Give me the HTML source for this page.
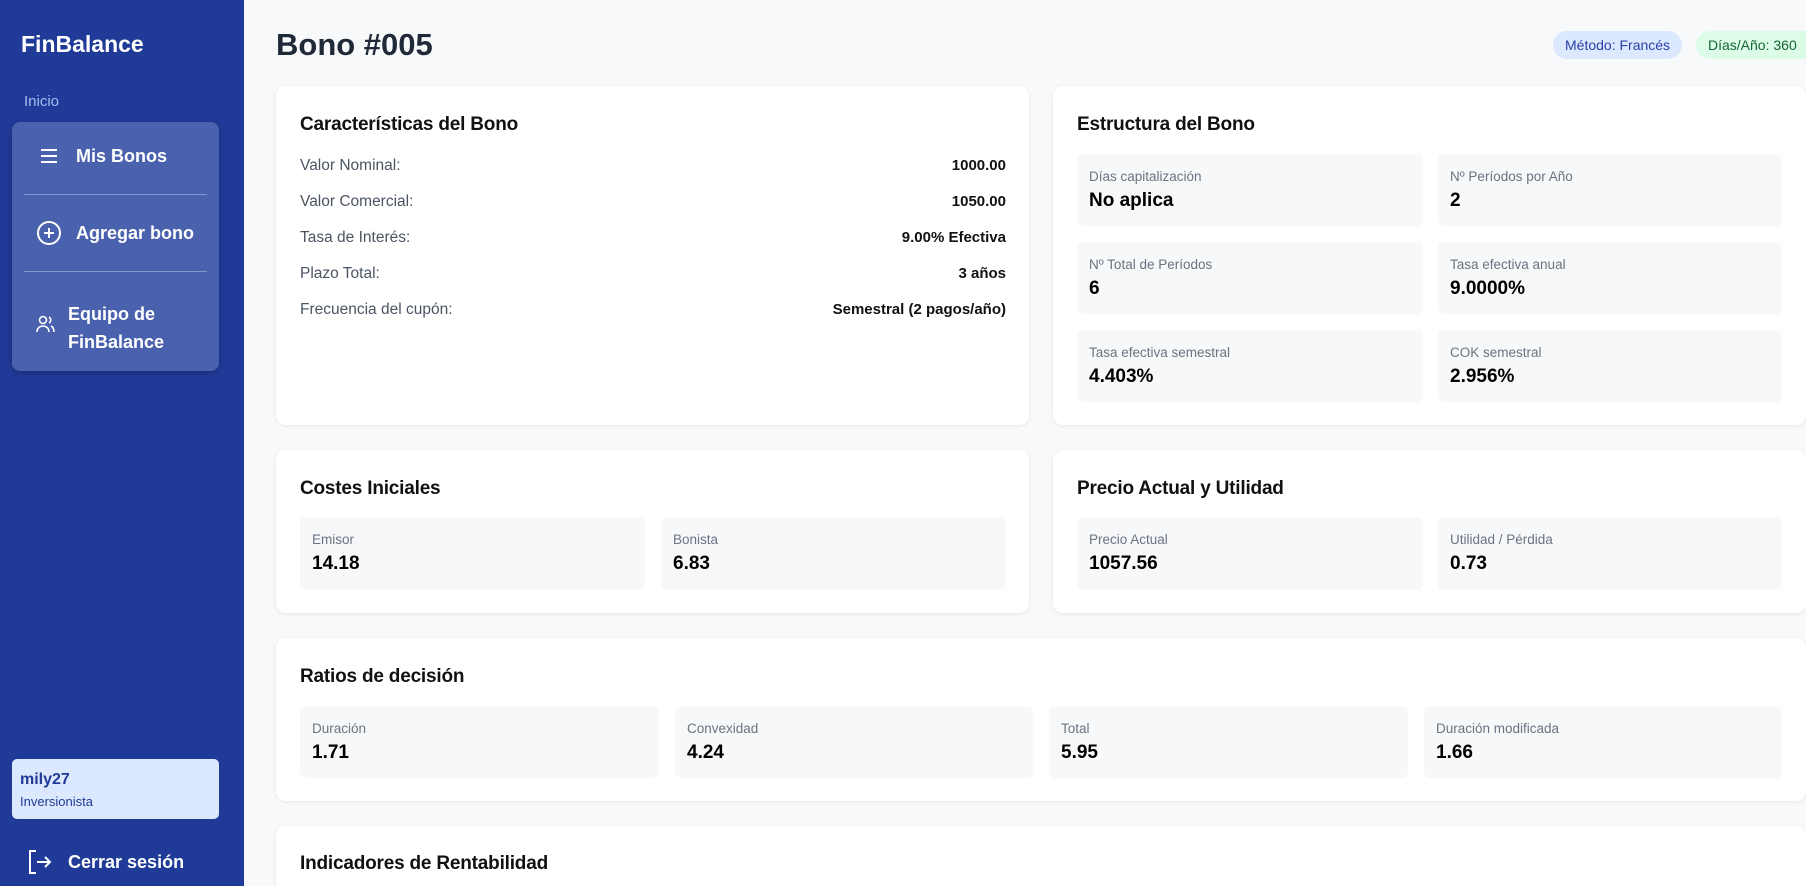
<!DOCTYPE html>
<html style="width:1806px;height:886px;overflow:hidden"><head><meta charset="utf-8"><style>
*{margin:0;padding:0;box-sizing:border-box}
body{width:1806px;height:886px;overflow:hidden;background:#f8f9fb;font-family:"Liberation Sans",sans-serif;position:relative}
.a{position:absolute}
.sb{left:0;top:0;width:244px;height:886px;background:#1f3a97}
.nav{left:12px;top:122px;width:207px;height:249px;background:#4a62ad;border-radius:8px;box-shadow:0 2px 6px rgba(0,0,0,.2)}
.ni{color:#fff;font-size:18px;font-weight:bold;white-space:nowrap}
.hr{left:24px;width:183px;height:1px;background:#8596cf}
.card{background:#fff;border-radius:10px;box-shadow:0 1px 4px rgba(0,0,0,.08)}
.ct{font-size:19px;color:#111;font-weight:bold;letter-spacing:-0.2px}
.row{left:300px;width:706px;font-size:15.5px;color:#4b5563;display:flex;justify-content:space-between}
.row b{color:#111;font-size:15px}
.tile{background:#f7f8fa;border-radius:6px}
.tile .l{position:absolute;left:12px;top:15px;font-size:13.5px;color:#6b7280}
.tile .v{position:absolute;left:12px;top:36px;font-size:19px;font-weight:bold;color:#000}
.badge{font-size:14px;border-radius:14px;height:28px;line-height:28px;padding:0 12px;white-space:nowrap;overflow:hidden}
</style></head><body>
<div class="a sb"></div>
<div class="a" style="left:21px;top:31px;font-size:23px;font-weight:bold;color:#fff">FinBalance</div>
<div class="a" style="left:24px;top:93px;font-size:15px;color:#a8bdf0">Inicio</div>
<div class="a nav"></div>
<svg class="a" style="left:39px;top:146px" width="20" height="20" viewBox="0 0 20 20" stroke="#fff" stroke-width="2"><path d="M2 4h16M2 10h16M2 16h16"/></svg>
<div class="a ni" style="left:76px;top:146px">Mis Bonos</div>
<div class="a hr" style="top:194px"></div>
<svg class="a" style="left:36px;top:220px" width="26" height="26" viewBox="0 0 26 26" fill="none" stroke="#fff" stroke-width="2"><circle cx="13" cy="13" r="11"/><path d="M13 8v10M8 13h10"/></svg>
<div class="a ni" style="left:76px;top:223px">Agregar bono</div>
<div class="a hr" style="top:271px"></div>
<svg class="a" style="left:36px;top:315px" width="20" height="18" viewBox="0 0 20 18" fill="none" stroke="#fff" stroke-width="1.6"><circle cx="7" cy="5" r="3.5"/><path d="M1 17c0-4 3-6 6-6s6 2 6 6"/><path d="M13 2a3.5 3.5 0 0 1 0 6M15 11c2 1 3 3 3 6"/></svg>
<div class="a ni" style="left:68px;top:300px;line-height:28px;white-space:normal">Equipo de<br>FinBalance</div>
<div class="a" style="left:12px;top:759px;width:207px;height:60px;background:#dbe8fe;border-radius:5px"></div>
<div class="a" style="left:20px;top:771px;font-size:16px;font-weight:bold;color:#1f3a97">mily27</div>
<div class="a" style="left:20px;top:794px;font-size:13px;color:#1f3a97">Inversionista</div>
<svg class="a" style="left:27px;top:849px" width="26" height="26" viewBox="0 0 26 26" fill="none" stroke="#fff" stroke-width="2"><path d="M9 2H3v22h6M10 13h13M18 8l5 5-5 5"/></svg>
<div class="a ni" style="left:68px;top:852px">Cerrar sesión</div>

<div class="a" style="left:276px;top:27px;font-size:31px;font-weight:bold;color:#1f2937">Bono #005</div>
<div class="a badge" style="left:1553px;top:31px;background:#dbe8fe;color:#2941a8">Método: Francés</div>
<div class="a badge" style="left:1696px;top:31px;width:110px;background:#dcfce7;color:#166534;border-radius:14px 0 0 14px">Días/Año: 360</div>

<div class="a card" style="left:276px;top:86px;width:753px;height:339px"></div>
<div class="a ct" style="left:300px;top:114px">Características del Bono</div>
<div class="a row" style="top:157px"><span>Valor Nominal:</span><b>1000.00</b></div>
<div class="a row" style="top:193px"><span>Valor Comercial:</span><b>1050.00</b></div>
<div class="a row" style="top:229px"><span>Tasa de Interés:</span><b>9.00% Efectiva</b></div>
<div class="a row" style="top:265px"><span>Plazo Total:</span><b>3 años</b></div>
<div class="a row" style="top:301px"><span>Frecuencia del cupón:</span><b>Semestral (2 pagos/año)</b></div>

<div class="a card" style="left:1053px;top:86px;width:753px;height:339px"></div>
<div class="a ct" style="left:1077px;top:114px">Estructura del Bono</div>
<div class="a tile" style="left:1077px;top:154px;width:346px;height:72px"><span class="l">Días capitalización</span><span class="v">No aplica</span></div>
<div class="a tile" style="left:1438px;top:154px;width:344px;height:72px"><span class="l">Nº Períodos por Año</span><span class="v">2</span></div>
<div class="a tile" style="left:1077px;top:242px;width:346px;height:72px"><span class="l">Nº Total de Períodos</span><span class="v">6</span></div>
<div class="a tile" style="left:1438px;top:242px;width:344px;height:72px"><span class="l">Tasa efectiva anual</span><span class="v">9.0000%</span></div>
<div class="a tile" style="left:1077px;top:330px;width:346px;height:72px"><span class="l">Tasa efectiva semestral</span><span class="v">4.403%</span></div>
<div class="a tile" style="left:1438px;top:330px;width:344px;height:72px"><span class="l">COK semestral</span><span class="v">2.956%</span></div>

<div class="a card" style="left:276px;top:450px;width:753px;height:163px"></div>
<div class="a ct" style="left:300px;top:478px">Costes Iniciales</div>
<div class="a tile" style="left:300px;top:517px;width:345px;height:73px"><span class="l">Emisor</span><span class="v">14.18</span></div>
<div class="a tile" style="left:661px;top:517px;width:345px;height:73px"><span class="l">Bonista</span><span class="v">6.83</span></div>

<div class="a card" style="left:1053px;top:450px;width:753px;height:163px"></div>
<div class="a ct" style="left:1077px;top:478px">Precio Actual y Utilidad</div>
<div class="a tile" style="left:1077px;top:517px;width:346px;height:73px"><span class="l">Precio Actual</span><span class="v">1057.56</span></div>
<div class="a tile" style="left:1438px;top:517px;width:344px;height:73px"><span class="l">Utilidad / Pérdida</span><span class="v">0.73</span></div>

<div class="a card" style="left:276px;top:638px;width:1530px;height:163px"></div>
<div class="a ct" style="left:300px;top:666px">Ratios de decisión</div>
<div class="a tile" style="left:300px;top:706px;width:359px;height:72px"><span class="l">Duración</span><span class="v">1.71</span></div>
<div class="a tile" style="left:675px;top:706px;width:358px;height:72px"><span class="l">Convexidad</span><span class="v">4.24</span></div>
<div class="a tile" style="left:1049px;top:706px;width:359px;height:72px"><span class="l">Total</span><span class="v">5.95</span></div>
<div class="a tile" style="left:1424px;top:706px;width:358px;height:72px"><span class="l">Duración modificada</span><span class="v">1.66</span></div>

<div class="a card" style="left:276px;top:826px;width:1530px;height:60px;border-radius:10px 10px 0 0"></div>
<div class="a ct" style="left:300px;top:853px">Indicadores de Rentabilidad</div>
</body></html>
